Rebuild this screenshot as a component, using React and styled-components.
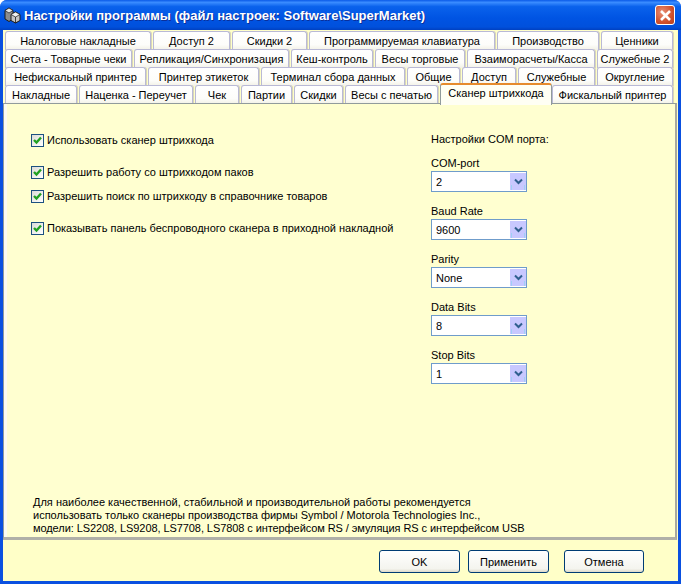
import React from 'react';
import styled, { createGlobalStyle } from 'styled-components';

const Global = createGlobalStyle`
  html, body { margin: 0; padding: 0; width: 681px; height: 584px; overflow: hidden; background: #fff; }
  * { box-sizing: border-box; }
`;
const Win = styled.div`
  width: 681px; height: 584px; display: flex; flex-direction: column;
  background: #0a50e0; font-family: "Liberation Sans", sans-serif; font-size: 11px; color: #000;
  border-radius: 7px 7px 0 0; overflow: hidden;
`;
const Title = styled.div`
  height: 30px; flex: none; display: flex; align-items: center; gap: 3px; padding: 0 6px 0 4px;
  background: linear-gradient(180deg, #0a5ae8 0%, #3a8cff 8%, #0a62ec 22%, #0054e3 60%, #0050dc 90%, #0040c0 100%);
  color: #fff; font-weight: bold; font-size: 13px; text-shadow: 1px 1px 0 #0a2f9a;
`;
const TitleText = styled.span` flex: 1; white-space: nowrap; `;
const Close = styled.div`
  width: 20px; height: 20px; border: 1px solid #fff; border-radius: 3px;
  background: radial-gradient(circle at 35% 35%, #e89078, #d0502c 60%, #b8401c);
  display: flex; align-items: center; justify-content: center;
`;
const Client = styled.div`
  flex: 1; margin: 0 3px 3px 3px; background: #ffffc8; display: flex; flex-direction: column; min-height: 0;
`;
const Tabs = styled.div` display: flex; flex-direction: column; padding: 1px 0 0 2px; flex: none; `;
const Row = styled.div` display: flex; height: 18px; gap: 2px; `;
const Tab = styled.div`
  flex: none; width: ${p => p.$w}px; height: 19px;
  display: flex; align-items: center; justify-content: center; white-space: nowrap;
  background: linear-gradient(180deg, #fff 0%, #fdfdfa 70%, #f2f1e6 100%);
  border: 1px solid #b9b9d6; border-bottom: none; border-radius: 3px 3px 0 0;
  box-shadow: 1px 0 0 #d8d6b8;
`;
const ActiveTab = styled(Tab)`
  position: relative; z-index: 2; height: 22px; margin-top: -2px; margin-right: -2px; padding-bottom: 4px;
  background: #fffff4; border: 1px solid #919b9c; border-top: 2px solid #e68b2c; border-bottom: none; box-shadow: none;
`;
const Panel = styled.div`
  flex: none; height: 437px; width: 674px;
  background: #ffffd0; border-top: 1px solid #919b9c; border-left: 1px solid #919b9c; border-right: 2px solid #a8a8a0; border-bottom: 3px solid #b0b0a8;
  box-shadow: inset 3px 0 0 #fcfcf2;
  display: flex; flex-direction: column;
`;
const Columns = styled.div` flex: 1; display: flex; `;
const Left = styled.div` width: 427px; flex: none; padding: 28px 0 0 27px; display: flex; flex-direction: column; `;
const Right = styled.div` flex: 1; padding: 28px 0 0 0; display: flex; flex-direction: column; `;
const Check = styled.label`
  display: flex; align-items: center; gap: 3px; height: 16px; margin-top: ${p => p.$mt || 0}px; white-space: nowrap;
`;
const Box = styled.span`
  width: 13px; height: 13px; flex: none; border: 1px solid #1c5180;
  background: linear-gradient(135deg, #dcdcd7, #fff); display: flex;
`;
const HeadLabel = styled.div` height: 14px; line-height: 14px; margin-bottom: 10px; `;
const Field = styled.div` display: flex; flex-direction: column; margin-bottom: 12px; `;
const FieldLabel = styled.div` height: 14px; line-height: 14px; margin-bottom: 1px; `;
const Combo = styled.div`
  width: 96px; height: 21px; border: 1px solid #6f9ccb; background: #fff; display: flex; align-items: center; padding: 1px 0 1px 1px;
`;
const ComboVal = styled.span` flex: 1; padding-left: 3px; `;
const Arrow = styled.span`
  width: 16px; height: 17px; display: flex; align-items: center; justify-content: center;
  background:
    linear-gradient(#9fd0f5, #9fd0f5) 1px 100% / 1px 5px no-repeat,
    linear-gradient(#9fd0f5, #9fd0f5) calc(100% - 1px) 100% / 1px 5px no-repeat,
    #c8c8ff;
`;
const Note = styled.div` padding: 0 0 2px 29px; line-height: 13px; flex: none; `;
const NoteLine = styled.div` white-space: nowrap; letter-spacing: ${p => p.$ls || 0}px; `;
const Bar = styled.div`
  flex: 1; display: flex; justify-content: flex-end; align-items: flex-start; gap: 8px; padding: 10px 34px 0 0;
`;
const Btn = styled.div`
  width: ${p => p.$w}px; height: 23px; margin-left: ${p => p.$ml || 0}px; border: 1px solid #003c74; border-radius: 3px;
  background: linear-gradient(180deg, #fff, #f4f4ee 85%, #dcd8c8); display: flex; align-items: center; justify-content: center;
`;

const rows = [
  [['Налоговые накладные',146],['Доступ 2',77],['Скидки 2',75],['Программируемая клавиатура',186],['Производство',102],['Ценники',72]],
  [['Счета - Товарные чеки',127],['Репликация/Синхронизация',155],['Кеш-контроль',82],['Весы торговые',90],['Взаиморасчеты/Касса',128],['Служебные 2',76]],
  [['Нефискальный принтер',141],['Принтер этикеток',111],['Терминал сбора данных',144],['Общие',53],['Доступ',54],['Служебные',77],['Округление',76]],
];
const last = [['Накладные',72],['Наценка - Переучет',114],['Чек',44],['Партии',51],['Скидки',49],['Весы с печатью',93]];

const Tick = () => (
  <svg width="11" height="11" viewBox="0 0 11 11"><path d="M2 5 L4.5 7.5 L9 2.5" fill="none" stroke="#21a121" strokeWidth="2.4"/></svg>
);
const Chev = () => (
  <svg width="9" height="7" viewBox="0 0 9 7"><path d="M1 1.5 L4.5 5 L8 1.5" fill="none" stroke="#2f5f8f" strokeWidth="2"/></svg>
);
const Cube = () => (
  <svg width="17" height="18" viewBox="0 0 17 18">
    <path d="M1 4.5 L5 2 L9 4.5 L9 13 L5 15.5 L1 13 Z" fill="#8c8c8c" stroke="#1c1c1c" strokeWidth="1"/>
    <path d="M1 4.5 L5 7 L9 4.5 L5 2 Z" fill="#e4e4e4" stroke="#1c1c1c" strokeWidth="0.7"/>
    <path d="M7 8.5 L11.5 6 L16 8.5 L16 14.5 L11.5 17 L7 14.5 Z" fill="#c4c4c4" stroke="#1c1c1c" strokeWidth="1"/>
    <path d="M7 8.5 L11.5 11 L16 8.5 L11.5 6 Z" fill="#f2f2f2" stroke="#1c1c1c" strokeWidth="0.7"/>
    <path d="M11.5 11 V17" stroke="#1c1c1c" strokeWidth="0.8"/>
  </svg>
);
const Field1 = ({ label, value }) => (
  <Field>
    <FieldLabel>{label}</FieldLabel>
    <Combo><ComboVal>{value}</ComboVal><Arrow><Chev /></Arrow></Combo>
  </Field>
);
const CheckRow = ({ mt, children }) => (
  <Check $mt={mt}><Box><Tick /></Box>{children}</Check>
);

export default function App() {
  return (
    <Win>
      <Global />
      <Title>
        <Cube />
        <TitleText>Настройки программы (файл настроек: Software\SuperMarket)</TitleText>
        <Close>
          <svg width="13" height="13" viewBox="0 0 13 13"><path d="M2 2 L11 11 M11 2 L2 11" stroke="#fff" strokeWidth="2.6"/></svg>
        </Close>
      </Title>
      <Client>
        <Tabs>
          {rows.map((r, i) => (
            <Row key={i}>{r.map(([t, w]) => <Tab key={t} $w={w}>{t}</Tab>)}</Row>
          ))}
          <Row>
            {last.map(([t, w]) => <Tab key={t} $w={w}>{t}</Tab>)}
            <ActiveTab $w={112}>Сканер штрихкода</ActiveTab>
            <Tab $w={121}>Фискальный принтер</Tab>
          </Row>
        </Tabs>
        <Panel>
          <Columns>
            <Left>
              <CheckRow>Использовать сканер штрихкода</CheckRow>
              <CheckRow mt={16}>Разрешить работу со штрихкодом паков</CheckRow>
              <CheckRow mt={8}>Разрешить поиск по штрихкоду в справочнике товаров</CheckRow>
              <CheckRow mt={16}>Показывать панель беспроводного сканера в приходной накладной</CheckRow>
            </Left>
            <Right>
              <HeadLabel>Настройки COM порта:</HeadLabel>
              <Field1 label="COM-port" value="2" />
              <Field1 label="Baud Rate" value="9600" />
              <Field1 label="Parity" value="None" />
              <Field1 label="Data Bits" value="8" />
              <Field1 label="Stop Bits" value="1" />
            </Right>
          </Columns>
          <Note>
            <NoteLine>Для наиболее качественной, стабильной и производительной работы рекомендуется</NoteLine>
            <NoteLine>использовать только сканеры производства фирмы Symbol / Motorola Technologies Inc.,</NoteLine>
            <NoteLine $ls={-0.08}>модели: LS2208, LS9208, LS7708, LS7808 с интерфейсом RS / эмуляция RS с интерфейсом USB</NoteLine>
          </Note>
        </Panel>
        <Bar>
          <Btn $w={81}>OK</Btn>
          <Btn $w={81}>Применить</Btn>
          <Btn $w={80} $ml={7}>Отмена</Btn>
        </Bar>
      </Client>
    </Win>
  );
}
